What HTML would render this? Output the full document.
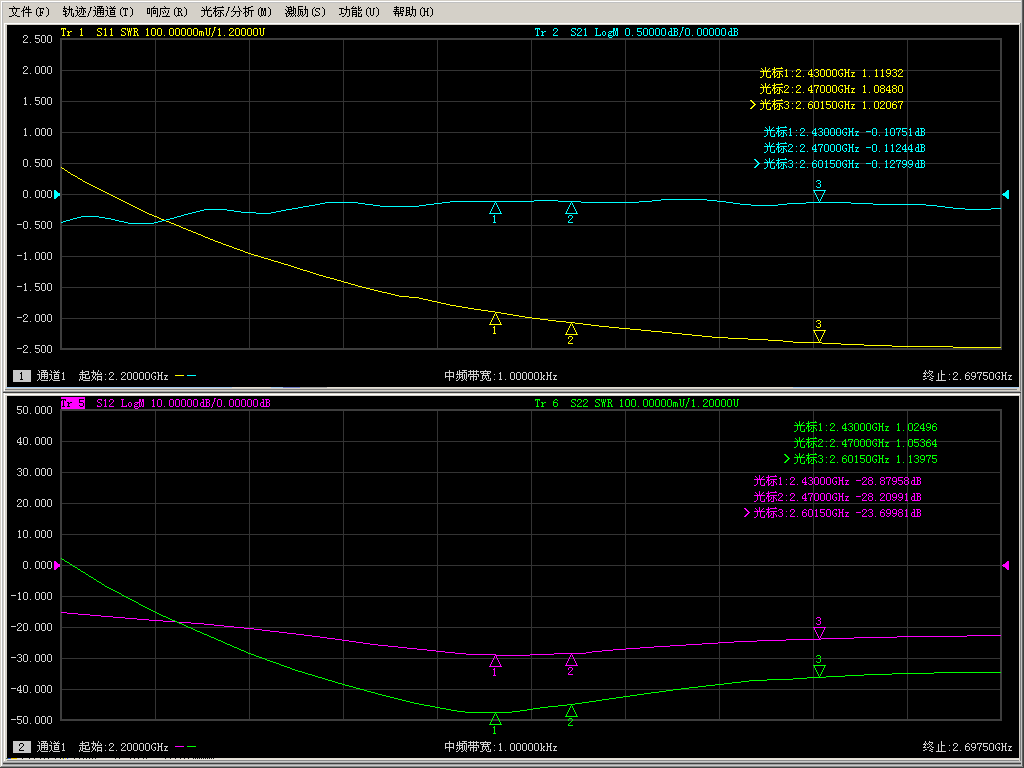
<!DOCTYPE html>
<html><head><meta charset="utf-8"><style>
html,body{margin:0;padding:0;background:#d4d0c8;overflow:hidden;font-family:"Liberation Sans",sans-serif;}
svg{position:absolute;left:0;top:0;display:block;}
</style></head><body>
<svg width="1024" height="768" viewBox="0 0 1024 768" shape-rendering="crispEdges">
<defs><path id="g6587" d="M4 0h1v1h-1zM5 1h1v1h-1zM0 2h11v1h-11zM3 3h1v1h-1zM7 3h1v1h-1zM3 4h1v1h-1zM7 4h1v1h-1zM3 5h1v1h-1zM7 5h1v1h-1zM4 6h1v1h-1zM6 6h1v1h-1zM4 7h1v1h-1zM6 7h1v1h-1zM5 8h1v1h-1zM3 9h2v1h-2zM6 9h2v1h-2zM0 10h3v1h-3zM8 10h3v1h-3z"/><path id="g4ef6" d="M3 0h1v1h-1zM7 0h1v1h-1zM3 1h1v1h-1zM5 1h1v1h-1zM7 1h1v1h-1zM2 2h1v1h-1zM5 2h1v1h-1zM7 2h1v1h-1zM2 3h1v1h-1zM4 3h6v1h-6zM1 4h3v1h-3zM7 4h1v1h-1zM0 5h1v1h-1zM2 5h1v1h-1zM7 5h1v1h-1zM2 6h1v1h-1zM4 6h7v1h-7zM2 7h1v1h-1zM7 7h1v1h-1zM2 8h1v1h-1zM7 8h1v1h-1zM2 9h1v1h-1zM7 9h1v1h-1zM2 10h1v1h-1zM7 10h1v1h-1z"/><path id="g28" d="M5 1h1v1h-1zM4 2h1v1h-1zM3 3h1v1h-1zM3 4h1v1h-1zM3 5h1v1h-1zM3 6h1v1h-1zM3 7h1v1h-1zM3 8h1v1h-1zM4 9h1v1h-1zM5 10h1v1h-1z"/><path id="g46" d="M0 2h5v1h-5zM1 3h1v1h-1zM4 3h1v1h-1zM1 4h1v1h-1zM1 5h1v1h-1zM3 5h1v1h-1zM1 6h3v1h-3zM1 7h1v1h-1zM3 7h1v1h-1zM1 8h1v1h-1zM0 9h3v1h-3z"/><path id="g29" d="M1 1h1v1h-1zM2 2h1v1h-1zM3 3h1v1h-1zM3 4h1v1h-1zM3 5h1v1h-1zM3 6h1v1h-1zM3 7h1v1h-1zM3 8h1v1h-1zM2 9h1v1h-1zM1 10h1v1h-1z"/><path id="g8f68" d="M1 0h1v1h-1zM6 0h1v1h-1zM1 1h1v1h-1zM6 1h1v1h-1zM0 2h4v1h-4zM6 2h1v1h-1zM8 2h1v1h-1zM1 3h1v1h-1zM4 3h6v1h-6zM0 4h1v1h-1zM2 4h1v1h-1zM6 4h1v1h-1zM8 4h1v1h-1zM0 5h4v1h-4zM6 5h1v1h-1zM8 5h1v1h-1zM2 6h1v1h-1zM6 6h1v1h-1zM8 6h1v1h-1zM2 7h2v1h-2zM5 7h1v1h-1zM8 7h1v1h-1zM10 7h1v1h-1zM0 8h3v1h-3zM5 8h1v1h-1zM8 8h1v1h-1zM10 8h1v1h-1zM2 9h1v1h-1zM4 9h1v1h-1zM8 9h1v1h-1zM10 9h1v1h-1zM2 10h2v1h-2zM9 10h2v1h-2z"/><path id="g8ff9" d="M1 0h1v1h-1zM6 0h1v1h-1zM2 1h1v1h-1zM7 1h1v1h-1zM2 2h1v1h-1zM4 2h7v1h-7zM6 3h1v1h-1zM8 3h1v1h-1zM0 4h3v1h-3zM4 4h1v1h-1zM6 4h1v1h-1zM8 4h2v1h-2zM2 5h1v1h-1zM4 5h1v1h-1zM6 5h1v1h-1zM8 5h1v1h-1zM10 5h1v1h-1zM2 6h2v1h-2zM6 6h1v1h-1zM8 6h1v1h-1zM10 6h1v1h-1zM2 7h1v1h-1zM5 7h1v1h-1zM8 7h1v1h-1zM2 8h1v1h-1zM4 8h1v1h-1zM7 8h2v1h-2zM1 9h1v1h-1zM3 9h1v1h-1zM0 10h1v1h-1zM4 10h7v1h-7z"/><path id="g2f" d="M3 1h2v1h-2zM3 2h1v1h-1zM3 3h1v1h-1zM3 4h1v1h-1zM2 5h1v1h-1zM2 6h1v1h-1zM1 7h1v1h-1zM1 8h1v1h-1zM1 9h1v1h-1zM0 10h1v1h-1z"/><path id="g901a" d="M1 0h1v1h-1zM4 0h6v1h-6zM2 1h1v1h-1zM6 1h1v1h-1zM8 1h1v1h-1zM2 2h1v1h-1zM4 2h7v1h-7zM4 3h1v1h-1zM7 3h1v1h-1zM10 3h1v1h-1zM0 4h3v1h-3zM4 4h7v1h-7zM2 5h1v1h-1zM4 5h1v1h-1zM7 5h1v1h-1zM10 5h1v1h-1zM2 6h1v1h-1zM4 6h7v1h-7zM2 7h1v1h-1zM4 7h1v1h-1zM7 7h1v1h-1zM10 7h1v1h-1zM2 8h1v1h-1zM4 8h1v1h-1zM7 8h1v1h-1zM9 8h2v1h-2zM1 9h1v1h-1zM3 9h1v1h-1zM0 10h1v1h-1zM4 10h7v1h-7z"/><path id="g9053" d="M1 0h1v1h-1zM5 0h1v1h-1zM9 0h1v1h-1zM2 1h1v1h-1zM6 1h1v1h-1zM8 1h1v1h-1zM2 2h1v1h-1zM4 2h7v1h-7zM7 3h1v1h-1zM0 4h3v1h-3zM5 4h5v1h-5zM2 5h1v1h-1zM5 5h1v1h-1zM9 5h1v1h-1zM2 6h1v1h-1zM5 6h5v1h-5zM2 7h1v1h-1zM5 7h1v1h-1zM9 7h1v1h-1zM2 8h1v1h-1zM5 8h5v1h-5zM1 9h1v1h-1zM3 9h1v1h-1zM0 10h1v1h-1zM4 10h7v1h-7z"/><path id="g54" d="M0 2h5v1h-5zM0 3h1v1h-1zM2 3h1v1h-1zM4 3h1v1h-1zM2 4h1v1h-1zM2 5h1v1h-1zM2 6h1v1h-1zM2 7h1v1h-1zM2 8h1v1h-1zM1 9h3v1h-3z"/><path id="g54cd" d="M7 0h1v1h-1zM6 1h1v1h-1zM0 2h3v1h-3zM4 2h7v1h-7zM0 3h1v1h-1zM2 3h1v1h-1zM4 3h1v1h-1zM10 3h1v1h-1zM0 4h1v1h-1zM2 4h1v1h-1zM4 4h1v1h-1zM6 4h3v1h-3zM10 4h1v1h-1zM0 5h1v1h-1zM2 5h1v1h-1zM4 5h1v1h-1zM6 5h1v1h-1zM8 5h1v1h-1zM10 5h1v1h-1zM0 6h1v1h-1zM2 6h1v1h-1zM4 6h1v1h-1zM6 6h1v1h-1zM8 6h1v1h-1zM10 6h1v1h-1zM0 7h3v1h-3zM4 7h1v1h-1zM6 7h3v1h-3zM10 7h1v1h-1zM4 8h1v1h-1zM10 8h1v1h-1zM4 9h1v1h-1zM10 9h1v1h-1zM4 10h1v1h-1zM9 10h2v1h-2z"/><path id="g5e94" d="M5 0h1v1h-1zM6 1h1v1h-1zM1 2h10v1h-10zM1 3h1v1h-1zM1 4h1v1h-1zM5 4h1v1h-1zM9 4h1v1h-1zM1 5h1v1h-1zM3 5h1v1h-1zM6 5h1v1h-1zM9 5h1v1h-1zM1 6h1v1h-1zM4 6h1v1h-1zM6 6h1v1h-1zM9 6h1v1h-1zM1 7h1v1h-1zM4 7h1v1h-1zM8 7h1v1h-1zM1 8h1v1h-1zM8 8h1v1h-1zM0 9h1v1h-1zM7 9h1v1h-1zM0 10h1v1h-1zM3 10h8v1h-8z"/><path id="g52" d="M0 2h4v1h-4zM1 3h1v1h-1zM4 3h1v1h-1zM1 4h1v1h-1zM4 4h1v1h-1zM1 5h3v1h-3zM1 6h1v1h-1zM3 6h1v1h-1zM1 7h1v1h-1zM4 7h1v1h-1zM1 8h1v1h-1zM4 8h1v1h-1zM0 9h3v1h-3zM4 9h2v1h-2z"/><path id="g5149" d="M5 0h1v1h-1zM1 1h1v1h-1zM5 1h1v1h-1zM9 1h1v1h-1zM2 2h1v1h-1zM5 2h1v1h-1zM8 2h1v1h-1zM3 3h1v1h-1zM5 3h1v1h-1zM7 3h1v1h-1zM0 4h11v1h-11zM3 5h1v1h-1zM6 5h1v1h-1zM3 6h1v1h-1zM6 6h1v1h-1zM3 7h1v1h-1zM6 7h1v1h-1zM3 8h1v1h-1zM6 8h1v1h-1zM10 8h1v1h-1zM2 9h1v1h-1zM6 9h1v1h-1zM10 9h1v1h-1zM0 10h2v1h-2zM7 10h4v1h-4z"/><path id="g6807" d="M2 0h1v1h-1zM9 0h1v1h-1zM2 1h1v1h-1zM4 1h7v1h-7zM0 2h4v1h-4zM2 3h1v1h-1zM1 4h2v1h-2zM4 4h7v1h-7zM1 5h3v1h-3zM7 5h1v1h-1zM0 6h1v1h-1zM2 6h1v1h-1zM5 6h1v1h-1zM7 6h2v1h-2zM0 7h1v1h-1zM2 7h1v1h-1zM5 7h1v1h-1zM7 7h1v1h-1zM9 7h1v1h-1zM2 8h1v1h-1zM4 8h1v1h-1zM7 8h1v1h-1zM10 8h1v1h-1zM2 9h2v1h-2zM7 9h1v1h-1zM10 9h1v1h-1zM2 10h1v1h-1zM5 10h3v1h-3z"/><path id="g5206" d="M3 0h1v1h-1zM7 0h1v1h-1zM3 1h1v1h-1zM7 1h1v1h-1zM2 2h1v1h-1zM8 2h1v1h-1zM2 3h1v1h-1zM8 3h1v1h-1zM1 4h1v1h-1zM9 4h1v1h-1zM0 5h1v1h-1zM2 5h7v1h-7zM10 5h1v1h-1zM4 6h1v1h-1zM8 6h1v1h-1zM4 7h1v1h-1zM8 7h1v1h-1zM3 8h1v1h-1zM8 8h1v1h-1zM2 9h1v1h-1zM8 9h1v1h-1zM0 10h2v1h-2zM6 10h2v1h-2z"/><path id="g6790" d="M2 0h1v1h-1zM8 0h2v1h-2zM2 1h1v1h-1zM5 1h3v1h-3zM0 2h6v1h-6zM2 3h1v1h-1zM5 3h1v1h-1zM2 4h1v1h-1zM5 4h6v1h-6zM2 5h2v1h-2zM5 5h1v1h-1zM8 5h1v1h-1zM1 6h2v1h-2zM4 6h2v1h-2zM8 6h1v1h-1zM0 7h1v1h-1zM2 7h1v1h-1zM5 7h1v1h-1zM8 7h1v1h-1zM2 8h1v1h-1zM5 8h1v1h-1zM8 8h1v1h-1zM2 9h1v1h-1zM4 9h1v1h-1zM8 9h1v1h-1zM2 10h2v1h-2zM8 10h1v1h-1z"/><path id="g4d" d="M0 2h2v1h-2zM3 2h2v1h-2zM0 3h2v1h-2zM3 3h2v1h-2zM0 4h2v1h-2zM3 4h2v1h-2zM0 5h1v1h-1zM2 5h1v1h-1zM4 5h1v1h-1zM0 6h1v1h-1zM2 6h1v1h-1zM4 6h1v1h-1zM0 7h1v1h-1zM2 7h1v1h-1zM4 7h1v1h-1zM0 8h1v1h-1zM2 8h1v1h-1zM4 8h1v1h-1zM0 9h2v1h-2zM3 9h2v1h-2z"/><path id="g6fc0" d="M1 0h1v1h-1zM5 0h1v1h-1zM8 0h1v1h-1zM2 1h5v1h-5zM8 1h1v1h-1zM3 2h1v1h-1zM6 2h1v1h-1zM8 2h3v1h-3zM0 3h1v1h-1zM3 3h4v1h-4zM8 3h1v1h-1zM10 3h1v1h-1zM1 4h1v1h-1zM3 4h1v1h-1zM6 4h3v1h-3zM10 4h1v1h-1zM2 5h5v1h-5zM8 5h1v1h-1zM10 5h1v1h-1zM2 6h1v1h-1zM4 6h1v1h-1zM8 6h1v1h-1zM10 6h1v1h-1zM0 7h2v1h-2zM3 7h6v1h-6zM10 7h1v1h-1zM1 8h1v1h-1zM4 8h1v1h-1zM6 8h1v1h-1zM9 8h1v1h-1zM1 9h1v1h-1zM3 9h1v1h-1zM6 9h1v1h-1zM8 9h1v1h-1zM10 9h1v1h-1zM1 10h2v1h-2zM5 10h1v1h-1zM7 10h1v1h-1zM10 10h1v1h-1z"/><path id="g52b1" d="M1 0h5v1h-5zM8 0h1v1h-1zM1 1h1v1h-1zM8 1h1v1h-1zM1 2h1v1h-1zM8 2h1v1h-1zM1 3h5v1h-5zM7 3h4v1h-4zM1 4h1v1h-1zM3 4h1v1h-1zM8 4h1v1h-1zM10 4h1v1h-1zM1 5h1v1h-1zM3 5h3v1h-3zM8 5h1v1h-1zM10 5h1v1h-1zM1 6h1v1h-1zM3 6h1v1h-1zM5 6h1v1h-1zM8 6h1v1h-1zM10 6h1v1h-1zM1 7h1v1h-1zM3 7h1v1h-1zM5 7h1v1h-1zM8 7h1v1h-1zM10 7h1v1h-1zM1 8h1v1h-1zM3 8h1v1h-1zM5 8h1v1h-1zM7 8h1v1h-1zM10 8h1v1h-1zM0 9h1v1h-1zM2 9h1v1h-1zM4 9h1v1h-1zM6 9h1v1h-1zM10 9h1v1h-1zM1 10h1v1h-1zM5 10h1v1h-1zM9 10h2v1h-2z"/><path id="g53" d="M1 2h4v1h-4zM0 3h1v1h-1zM4 3h1v1h-1zM0 4h1v1h-1zM1 5h2v1h-2zM3 6h1v1h-1zM4 7h1v1h-1zM0 8h1v1h-1zM4 8h1v1h-1zM0 9h4v1h-4z"/><path id="g529f" d="M7 0h1v1h-1zM7 1h1v1h-1zM0 2h5v1h-5zM7 2h1v1h-1zM2 3h1v1h-1zM5 3h6v1h-6zM2 4h1v1h-1zM7 4h1v1h-1zM10 4h1v1h-1zM2 5h1v1h-1zM7 5h1v1h-1zM10 5h1v1h-1zM2 6h1v1h-1zM7 6h1v1h-1zM10 6h1v1h-1zM2 7h3v1h-3zM6 7h1v1h-1zM10 7h1v1h-1zM0 8h2v1h-2zM6 8h1v1h-1zM10 8h1v1h-1zM5 9h1v1h-1zM10 9h1v1h-1zM3 10h2v1h-2zM8 10h2v1h-2z"/><path id="g80fd" d="M2 0h1v1h-1zM7 0h1v1h-1zM1 1h1v1h-1zM4 1h1v1h-1zM7 1h1v1h-1zM9 1h1v1h-1zM0 2h6v1h-6zM7 2h2v1h-2zM7 3h1v1h-1zM10 3h1v1h-1zM1 4h5v1h-5zM7 4h4v1h-4zM1 5h1v1h-1zM5 5h1v1h-1zM1 6h5v1h-5zM7 6h1v1h-1zM9 6h1v1h-1zM1 7h1v1h-1zM5 7h1v1h-1zM7 7h2v1h-2zM1 8h5v1h-5zM7 8h1v1h-1zM10 8h1v1h-1zM1 9h1v1h-1zM5 9h1v1h-1zM7 9h1v1h-1zM10 9h1v1h-1zM1 10h1v1h-1zM4 10h2v1h-2zM7 10h4v1h-4z"/><path id="g55" d="M0 2h2v1h-2zM4 2h2v1h-2zM1 3h1v1h-1zM4 3h1v1h-1zM1 4h1v1h-1zM4 4h1v1h-1zM1 5h1v1h-1zM4 5h1v1h-1zM1 6h1v1h-1zM4 6h1v1h-1zM1 7h1v1h-1zM4 7h1v1h-1zM1 8h1v1h-1zM4 8h1v1h-1zM2 9h2v1h-2z"/><path id="g5e2e" d="M3 0h1v1h-1zM1 1h5v1h-5zM7 1h4v1h-4zM3 2h1v1h-1zM7 2h1v1h-1zM10 2h1v1h-1zM1 3h5v1h-5zM7 3h1v1h-1zM9 3h1v1h-1zM3 4h1v1h-1zM7 4h1v1h-1zM10 4h1v1h-1zM0 5h6v1h-6zM7 5h4v1h-4zM2 6h1v1h-1zM5 6h1v1h-1zM7 6h1v1h-1zM1 7h9v1h-9zM2 8h1v1h-1zM5 8h1v1h-1zM9 8h1v1h-1zM2 9h1v1h-1zM5 9h1v1h-1zM8 9h2v1h-2zM5 10h1v1h-1z"/><path id="g52a9" d="M7 0h1v1h-1zM1 1h4v1h-4zM7 1h1v1h-1zM1 2h1v1h-1zM4 2h1v1h-1zM7 2h1v1h-1zM1 3h1v1h-1zM4 3h1v1h-1zM6 3h5v1h-5zM1 4h4v1h-4zM7 4h1v1h-1zM10 4h1v1h-1zM1 5h1v1h-1zM4 5h1v1h-1zM7 5h1v1h-1zM10 5h1v1h-1zM1 6h4v1h-4zM7 6h1v1h-1zM10 6h1v1h-1zM1 7h1v1h-1zM4 7h1v1h-1zM7 7h1v1h-1zM10 7h1v1h-1zM1 8h1v1h-1zM3 8h4v1h-4zM10 8h1v1h-1zM0 9h3v1h-3zM6 9h1v1h-1zM8 9h1v1h-1zM10 9h1v1h-1zM5 10h1v1h-1zM9 10h1v1h-1z"/><path id="g48" d="M0 2h2v1h-2zM4 2h2v1h-2zM1 3h1v1h-1zM4 3h1v1h-1zM1 4h1v1h-1zM4 4h1v1h-1zM1 5h4v1h-4zM1 6h1v1h-1zM4 6h1v1h-1zM1 7h1v1h-1zM4 7h1v1h-1zM1 8h1v1h-1zM4 8h1v1h-1zM0 9h2v1h-2zM4 9h2v1h-2z"/><path id="g32" d="M1 2h3v1h-3zM0 3h1v1h-1zM4 3h1v1h-1zM0 4h1v1h-1zM4 4h1v1h-1zM3 5h1v1h-1zM2 6h1v1h-1zM1 7h1v1h-1zM0 8h1v1h-1zM0 9h5v1h-5z"/><path id="g2e" d="M1 9h1v1h-1z"/><path id="g35" d="M0 2h5v1h-5zM0 3h1v1h-1zM0 4h1v1h-1zM0 5h4v1h-4zM4 6h1v1h-1zM4 7h1v1h-1zM0 8h1v1h-1zM4 8h1v1h-1zM1 9h3v1h-3z"/><path id="g30" d="M1 2h3v1h-3zM0 3h1v1h-1zM4 3h1v1h-1zM0 4h1v1h-1zM4 4h1v1h-1zM0 5h1v1h-1zM4 5h1v1h-1zM0 6h1v1h-1zM4 6h1v1h-1zM0 7h1v1h-1zM4 7h1v1h-1zM0 8h1v1h-1zM4 8h1v1h-1zM1 9h3v1h-3z"/><path id="g31" d="M2 2h1v1h-1zM1 3h2v1h-2zM2 4h1v1h-1zM2 5h1v1h-1zM2 6h1v1h-1zM2 7h1v1h-1zM2 8h1v1h-1zM1 9h3v1h-3z"/><path id="g2d" d="M0 5h5v1h-5z"/><path id="g33" d="M1 2h3v1h-3zM0 3h1v1h-1zM4 3h1v1h-1zM4 4h1v1h-1zM2 5h2v1h-2zM4 6h1v1h-1zM4 7h1v1h-1zM0 8h1v1h-1zM4 8h1v1h-1zM1 9h3v1h-3z"/><path id="g72" d="M0 5h2v1h-2zM3 5h2v1h-2zM1 6h2v1h-2zM1 7h1v1h-1zM1 8h1v1h-1zM0 9h3v1h-3z"/><path id="g57" d="M0 2h1v1h-1zM2 2h1v1h-1zM4 2h1v1h-1zM0 3h1v1h-1zM2 3h1v1h-1zM4 3h1v1h-1zM0 4h1v1h-1zM2 4h1v1h-1zM4 4h1v1h-1zM1 5h3v1h-3zM1 6h1v1h-1zM3 6h1v1h-1zM1 7h1v1h-1zM3 7h1v1h-1zM1 8h1v1h-1zM3 8h1v1h-1zM1 9h1v1h-1zM3 9h1v1h-1z"/><path id="g6d" d="M0 5h4v1h-4zM0 6h1v1h-1zM2 6h1v1h-1zM4 6h1v1h-1zM0 7h1v1h-1zM2 7h1v1h-1zM4 7h1v1h-1zM0 8h1v1h-1zM2 8h1v1h-1zM4 8h1v1h-1zM0 9h1v1h-1zM2 9h1v1h-1zM4 9h1v1h-1z"/><path id="g4c" d="M0 2h3v1h-3zM1 3h1v1h-1zM1 4h1v1h-1zM1 5h1v1h-1zM1 6h1v1h-1zM1 7h1v1h-1zM1 8h1v1h-1zM5 8h1v1h-1zM0 9h6v1h-6z"/><path id="g6f" d="M2 5h2v1h-2zM1 6h1v1h-1zM4 6h1v1h-1zM1 7h1v1h-1zM4 7h1v1h-1zM1 8h1v1h-1zM4 8h1v1h-1zM2 9h2v1h-2z"/><path id="g67" d="M2 5h4v1h-4zM1 6h1v1h-1zM4 6h1v1h-1zM2 7h2v1h-2zM1 8h1v1h-1zM1 9h4v1h-4zM1 10h1v1h-1zM5 10h1v1h-1zM2 11h3v1h-3z"/><path id="g64" d="M3 2h2v1h-2zM4 3h1v1h-1zM4 4h1v1h-1zM2 5h3v1h-3zM1 6h1v1h-1zM4 6h1v1h-1zM1 7h1v1h-1zM4 7h1v1h-1zM1 8h1v1h-1zM4 8h1v1h-1zM2 9h4v1h-4z"/><path id="g42" d="M0 2h4v1h-4zM1 3h1v1h-1zM4 3h1v1h-1zM1 4h1v1h-1zM4 4h1v1h-1zM1 5h3v1h-3zM1 6h1v1h-1zM4 6h1v1h-1zM1 7h1v1h-1zM4 7h1v1h-1zM1 8h1v1h-1zM4 8h1v1h-1zM0 9h4v1h-4z"/><path id="g3a" d="M2 4h1v1h-1zM2 9h1v1h-1z"/><path id="g34" d="M3 2h1v1h-1zM2 3h2v1h-2zM1 4h1v1h-1zM3 4h1v1h-1zM0 5h1v1h-1zM3 5h1v1h-1zM0 6h1v1h-1zM3 6h1v1h-1zM0 7h5v1h-5zM3 8h1v1h-1zM2 9h3v1h-3z"/><path id="g47" d="M2 2h3v1h-3zM1 3h1v1h-1zM4 3h1v1h-1zM0 4h1v1h-1zM0 5h1v1h-1zM0 6h1v1h-1zM3 6h2v1h-2zM0 7h1v1h-1zM4 7h1v1h-1zM1 8h1v1h-1zM4 8h1v1h-1zM2 9h2v1h-2z"/><path id="g7a" d="M1 5h4v1h-4zM3 6h1v1h-1zM2 7h1v1h-1zM2 8h1v1h-1zM1 9h4v1h-4z"/><path id="g39" d="M1 2h3v1h-3zM0 3h1v1h-1zM4 3h1v1h-1zM0 4h1v1h-1zM4 4h1v1h-1zM0 5h1v1h-1zM4 5h1v1h-1zM1 6h4v1h-4zM4 7h1v1h-1zM0 8h1v1h-1zM3 8h1v1h-1zM1 9h2v1h-2z"/><path id="g37" d="M0 2h5v1h-5zM0 3h1v1h-1zM4 3h1v1h-1zM3 4h1v1h-1zM3 5h1v1h-1zM2 6h1v1h-1zM2 7h1v1h-1zM2 8h1v1h-1zM2 9h1v1h-1z"/><path id="g38" d="M1 2h3v1h-3zM0 3h1v1h-1zM4 3h1v1h-1zM0 4h1v1h-1zM4 4h1v1h-1zM1 5h3v1h-3zM0 6h1v1h-1zM4 6h1v1h-1zM0 7h1v1h-1zM4 7h1v1h-1zM0 8h1v1h-1zM4 8h1v1h-1zM1 9h3v1h-3z"/><path id="g36" d="M2 2h2v1h-2zM1 3h1v1h-1zM4 3h1v1h-1zM0 4h1v1h-1zM0 5h4v1h-4zM0 6h1v1h-1zM4 6h1v1h-1zM0 7h1v1h-1zM4 7h1v1h-1zM0 8h1v1h-1zM4 8h1v1h-1zM1 9h3v1h-3z"/><path id="g3e" d="M0 1h2v1h-2zM1 2h2v1h-2zM2 3h2v1h-2zM3 4h2v1h-2zM4 5h2v1h-2zM3 6h2v1h-2zM2 7h2v1h-2zM1 8h2v1h-2zM0 9h2v1h-2z"/><path id="g8d77" d="M3 0h1v1h-1zM3 1h1v1h-1zM6 1h4v1h-4zM1 2h5v1h-5zM9 2h1v1h-1zM3 3h1v1h-1zM9 3h1v1h-1zM0 4h10v1h-10zM3 5h1v1h-1zM6 5h1v1h-1zM1 6h1v1h-1zM3 6h1v1h-1zM6 6h1v1h-1zM10 6h1v1h-1zM1 7h1v1h-1zM3 7h4v1h-4zM10 7h1v1h-1zM1 8h1v1h-1zM3 8h1v1h-1zM6 8h5v1h-5zM0 9h1v1h-1zM2 9h2v1h-2zM0 10h1v1h-1zM4 10h7v1h-7z"/><path id="g59cb" d="M2 0h1v1h-1zM7 0h1v1h-1zM2 1h1v1h-1zM7 1h1v1h-1zM0 2h5v1h-5zM6 2h1v1h-1zM9 2h1v1h-1zM2 3h1v1h-1zM4 3h1v1h-1zM6 3h1v1h-1zM10 3h1v1h-1zM2 4h1v1h-1zM4 4h7v1h-7zM1 5h1v1h-1zM4 5h1v1h-1zM1 6h1v1h-1zM3 6h1v1h-1zM6 6h5v1h-5zM2 7h2v1h-2zM6 7h1v1h-1zM10 7h1v1h-1zM2 8h1v1h-1zM4 8h1v1h-1zM6 8h1v1h-1zM10 8h1v1h-1zM1 9h1v1h-1zM4 9h1v1h-1zM6 9h5v1h-5zM0 10h1v1h-1zM6 10h1v1h-1zM10 10h1v1h-1z"/><path id="g4e2d" d="M5 0h1v1h-1zM5 1h1v1h-1zM1 2h9v1h-9zM1 3h1v1h-1zM5 3h1v1h-1zM9 3h1v1h-1zM1 4h1v1h-1zM5 4h1v1h-1zM9 4h1v1h-1zM1 5h1v1h-1zM5 5h1v1h-1zM9 5h1v1h-1zM1 6h9v1h-9zM1 7h1v1h-1zM5 7h1v1h-1zM9 7h1v1h-1zM5 8h1v1h-1zM5 9h1v1h-1zM5 10h1v1h-1z"/><path id="g9891" d="M3 0h1v1h-1zM6 0h5v1h-5zM1 1h1v1h-1zM3 1h1v1h-1zM8 1h1v1h-1zM1 2h1v1h-1zM3 2h8v1h-8zM1 3h1v1h-1zM3 3h1v1h-1zM6 3h1v1h-1zM10 3h1v1h-1zM0 4h7v1h-7zM8 4h1v1h-1zM10 4h1v1h-1zM3 5h1v1h-1zM6 5h1v1h-1zM8 5h1v1h-1zM10 5h1v1h-1zM1 6h1v1h-1zM3 6h1v1h-1zM5 6h2v1h-2zM8 6h1v1h-1zM10 6h1v1h-1zM1 7h1v1h-1zM3 7h2v1h-2zM6 7h1v1h-1zM8 7h1v1h-1zM10 7h1v1h-1zM0 8h1v1h-1zM3 8h1v1h-1zM6 8h1v1h-1zM8 8h1v1h-1zM10 8h1v1h-1zM2 9h1v1h-1zM7 9h1v1h-1zM9 9h1v1h-1zM0 10h2v1h-2zM5 10h2v1h-2zM10 10h1v1h-1z"/><path id="g5e26" d="M2 0h1v1h-1zM5 0h1v1h-1zM8 0h1v1h-1zM0 1h11v1h-11zM2 2h1v1h-1zM5 2h1v1h-1zM8 2h1v1h-1zM2 3h1v1h-1zM5 3h1v1h-1zM8 3h1v1h-1zM0 4h11v1h-11zM0 5h1v1h-1zM5 5h1v1h-1zM10 5h1v1h-1zM0 6h1v1h-1zM2 6h7v1h-7zM10 6h1v1h-1zM2 7h1v1h-1zM5 7h1v1h-1zM8 7h1v1h-1zM2 8h1v1h-1zM5 8h1v1h-1zM8 8h1v1h-1zM2 9h1v1h-1zM5 9h1v1h-1zM7 9h2v1h-2zM5 10h1v1h-1z"/><path id="g5bbd" d="M5 0h1v1h-1zM0 1h11v1h-11zM0 2h1v1h-1zM3 2h1v1h-1zM7 2h1v1h-1zM10 2h1v1h-1zM1 3h9v1h-9zM3 4h1v1h-1zM7 4h1v1h-1zM2 5h7v1h-7zM2 6h1v1h-1zM5 6h1v1h-1zM8 6h1v1h-1zM2 7h1v1h-1zM5 7h1v1h-1zM8 7h1v1h-1zM2 8h1v1h-1zM4 8h1v1h-1zM6 8h1v1h-1zM8 8h1v1h-1zM10 8h1v1h-1zM3 9h1v1h-1zM6 9h1v1h-1zM10 9h1v1h-1zM0 10h3v1h-3zM7 10h4v1h-4z"/><path id="g6b" d="M0 2h2v1h-2zM1 3h1v1h-1zM1 4h1v1h-1zM1 5h1v1h-1zM3 5h2v1h-2zM1 6h1v1h-1zM3 6h1v1h-1zM1 7h2v1h-2zM1 8h1v1h-1zM3 8h1v1h-1zM0 9h2v1h-2zM3 9h2v1h-2z"/><path id="g7ec8" d="M2 0h1v1h-1zM6 0h1v1h-1zM2 1h1v1h-1zM6 1h4v1h-4zM1 2h1v1h-1zM3 2h1v1h-1zM5 2h1v1h-1zM9 2h1v1h-1zM0 3h3v1h-3zM4 3h1v1h-1zM6 3h1v1h-1zM8 3h1v1h-1zM2 4h1v1h-1zM7 4h1v1h-1zM1 5h1v1h-1zM6 5h1v1h-1zM8 5h1v1h-1zM0 6h3v1h-3zM4 6h2v1h-2zM9 6h2v1h-2zM7 7h1v1h-1zM2 8h2v1h-2zM8 8h2v1h-2zM0 9h2v1h-2zM6 9h2v1h-2zM8 10h2v1h-2z"/><path id="g6b62" d="M6 0h1v1h-1zM6 1h1v1h-1zM6 2h1v1h-1zM3 3h1v1h-1zM6 3h1v1h-1zM3 4h1v1h-1zM6 4h4v1h-4zM3 5h1v1h-1zM6 5h1v1h-1zM3 6h1v1h-1zM6 6h1v1h-1zM3 7h1v1h-1zM6 7h1v1h-1zM3 8h1v1h-1zM6 8h1v1h-1zM3 9h1v1h-1zM6 9h1v1h-1zM1 10h10v1h-10z"/></defs>
<rect x="0" y="0" width="1024" height="768" fill="#d4d0c8"/>
<rect x="1" y="1" width="1021" height="1" fill="#ffffff"/>
<rect x="1" y="1" width="1" height="766" fill="#ffffff"/>
<rect x="2" y="2" width="1019" height="1" fill="#c0c0c0"/>
<rect x="2" y="2" width="1" height="764" fill="#b8b8b8"/>
<rect x="1020" y="23" width="1" height="744" fill="#808080"/>
<rect x="1021" y="0" width="1" height="768" fill="#c4c4c4"/>
<rect x="1022" y="0" width="1" height="768" fill="#606060"/>
<rect x="1023" y="0" width="1" height="768" fill="#404040"/>
<rect x="4" y="23" width="1016" height="1" fill="#ffffff"/>
<rect x="4" y="23" width="1" height="739" fill="#ffffff"/>
<rect x="7" y="25" width="1012" height="362" fill="#000000"/>
<rect x="6" y="387" width="1013" height="1" fill="#e0dcd4"/>
<rect x="6" y="387" width="226" height="1" fill="#a6caf0"/>
<rect x="271" y="387" width="12" height="1" fill="#a6caf0"/>
<rect x="283" y="387" width="17" height="1" fill="#7080c8"/>
<rect x="300" y="387" width="27" height="1" fill="#a8a8a8"/>
<rect x="793" y="387" width="226" height="1" fill="#a6caf0"/>
<rect x="5" y="389" width="1012" height="1" fill="#808080"/>
<rect x="3" y="391" width="1018" height="1" fill="#a0a0a0"/>
<rect x="3" y="392" width="1018" height="1" fill="#404040"/>
<rect x="4" y="394" width="1016" height="1" fill="#ffffff"/>
<rect x="7" y="396" width="1012" height="362" fill="#000000"/>
<rect x="6" y="758" width="1013" height="1" fill="#e0dcd4"/>
<rect x="6" y="759" width="1013" height="1" fill="#e8e4dc"/>
<rect x="7" y="760" width="1012" height="1" fill="#888888"/>
<rect x="6" y="758" width="2" height="1" fill="#507040"/>
<rect x="8" y="758" width="3" height="1" fill="#3050d0"/>
<rect x="11" y="758" width="6" height="1" fill="#f0c800"/>
<rect x="62" y="758" width="1" height="1" fill="#f0e000"/>
<rect x="63" y="758" width="1" height="1" fill="#2040e0"/>
<rect x="65" y="758" width="1" height="1" fill="#f0e000"/>
<rect x="67" y="758" width="1" height="1" fill="#3050e0"/>
<rect x="22" y="758" width="1" height="1" fill="#202020"/>
<rect x="29" y="758" width="1" height="1" fill="#202020"/>
<rect x="34" y="758" width="1" height="1" fill="#202020"/>
<rect x="40" y="758" width="1" height="1" fill="#202020"/>
<rect x="44" y="758" width="1" height="1" fill="#202020"/>
<rect x="48" y="758" width="1" height="1" fill="#202020"/>
<rect x="55" y="758" width="1" height="1" fill="#202020"/>
<rect x="60" y="758" width="1" height="1" fill="#202020"/>
<rect x="74" y="758" width="1" height="1" fill="#202020"/>
<rect x="79" y="758" width="1" height="1" fill="#202020"/>
<rect x="83" y="758" width="1" height="1" fill="#202020"/>
<rect x="86" y="758" width="1" height="1" fill="#202020"/>
<rect x="89" y="758" width="1" height="1" fill="#202020"/>
<rect x="92" y="758" width="1" height="1" fill="#202020"/>
<rect x="95" y="758" width="1" height="1" fill="#202020"/>
<rect x="115" y="758" width="1" height="1" fill="#202020"/>
<rect x="119" y="758" width="1" height="1" fill="#202020"/>
<rect x="130" y="758" width="1" height="1" fill="#202020"/>
<rect x="134" y="758" width="1" height="1" fill="#202020"/>
<rect x="138" y="758" width="1" height="1" fill="#202020"/>
<rect x="143" y="758" width="1" height="1" fill="#202020"/>
<rect x="146" y="758" width="1" height="1" fill="#202020"/>
<rect x="165" y="758" width="1" height="1" fill="#202020"/>
<rect x="170" y="758" width="1" height="1" fill="#202020"/>
<rect x="175" y="758" width="1" height="1" fill="#202020"/>
<rect x="180" y="758" width="1" height="1" fill="#202020"/>
<rect x="184" y="758" width="1" height="1" fill="#202020"/>
<rect x="188" y="758" width="1" height="1" fill="#202020"/>
<rect x="193" y="758" width="1" height="1" fill="#202020"/>
<rect x="195" y="758" width="1" height="1" fill="#202020"/>
<rect x="197" y="758" width="1" height="1" fill="#202020"/>
<rect x="199" y="758" width="1" height="1" fill="#202020"/>
<rect x="201" y="758" width="1" height="1" fill="#202020"/>
<rect x="203" y="758" width="1" height="1" fill="#202020"/>
<rect x="205" y="758" width="1" height="1" fill="#202020"/>
<rect x="207" y="758" width="1" height="1" fill="#202020"/>
<rect x="209" y="758" width="1" height="1" fill="#202020"/>
<rect x="211" y="758" width="1" height="1" fill="#202020"/>
<rect x="213" y="758" width="1" height="1" fill="#202020"/>
<rect x="4" y="761" width="1017" height="1" fill="#c8c8c8"/>
<rect x="3" y="762" width="1018" height="1" fill="#a0a0a0"/>
<rect x="3" y="763" width="1018" height="1" fill="#404040"/>
<rect x="3" y="764" width="1018" height="1" fill="#a0a0a0"/>
<rect x="2" y="765" width="1020" height="1" fill="#c8c8c8"/>
<rect x="1" y="766" width="1022" height="1" fill="#888888"/>
<rect x="0" y="767" width="1024" height="1" fill="#404040"/>
<g fill="#000000"><use href="#g6587" x="9" y="6"/><use href="#g4ef6" x="21" y="6"/><use href="#g28" x="33" y="6"/><use href="#g46" x="39" y="6"/><use href="#g29" x="45" y="6"/></g>
<g fill="#000000"><use href="#g8f68" x="63" y="6"/><use href="#g8ff9" x="75" y="6"/><use href="#g2f" x="87" y="6"/><use href="#g901a" x="93" y="6"/><use href="#g9053" x="105" y="6"/><use href="#g28" x="117" y="6"/><use href="#g54" x="123" y="6"/><use href="#g29" x="129" y="6"/></g>
<g fill="#000000"><use href="#g54cd" x="147" y="6"/><use href="#g5e94" x="159" y="6"/><use href="#g28" x="171" y="6"/><use href="#g52" x="177" y="6"/><use href="#g29" x="183" y="6"/></g>
<g fill="#000000"><use href="#g5149" x="201" y="6"/><use href="#g6807" x="213" y="6"/><use href="#g2f" x="225" y="6"/><use href="#g5206" x="231" y="6"/><use href="#g6790" x="243" y="6"/><use href="#g28" x="255" y="6"/><use href="#g4d" x="261" y="6"/><use href="#g29" x="267" y="6"/></g>
<g fill="#000000"><use href="#g6fc0" x="285" y="6"/><use href="#g52b1" x="297" y="6"/><use href="#g28" x="309" y="6"/><use href="#g53" x="315" y="6"/><use href="#g29" x="321" y="6"/></g>
<g fill="#000000"><use href="#g529f" x="339" y="6"/><use href="#g80fd" x="351" y="6"/><use href="#g28" x="363" y="6"/><use href="#g55" x="369" y="6"/><use href="#g29" x="375" y="6"/></g>
<g fill="#000000"><use href="#g5e2e" x="393" y="6"/><use href="#g52a9" x="405" y="6"/><use href="#g28" x="417" y="6"/><use href="#g48" x="423" y="6"/><use href="#g29" x="429" y="6"/></g>
<rect x="155" y="40" width="1" height="308" fill="#343434"/>
<rect x="62" y="70" width="938" height="1" fill="#343434"/>
<rect x="249" y="40" width="1" height="308" fill="#343434"/>
<rect x="62" y="101" width="938" height="1" fill="#343434"/>
<rect x="343" y="40" width="1" height="308" fill="#343434"/>
<rect x="62" y="132" width="938" height="1" fill="#343434"/>
<rect x="437" y="40" width="1" height="308" fill="#343434"/>
<rect x="62" y="163" width="938" height="1" fill="#343434"/>
<rect x="531" y="40" width="1" height="308" fill="#343434"/>
<rect x="62" y="194" width="938" height="1" fill="#343434"/>
<rect x="625" y="40" width="1" height="308" fill="#343434"/>
<rect x="62" y="225" width="938" height="1" fill="#343434"/>
<rect x="719" y="40" width="1" height="308" fill="#343434"/>
<rect x="62" y="256" width="938" height="1" fill="#343434"/>
<rect x="813" y="40" width="1" height="308" fill="#343434"/>
<rect x="62" y="287" width="938" height="1" fill="#343434"/>
<rect x="907" y="40" width="1" height="308" fill="#343434"/>
<rect x="62" y="318" width="938" height="1" fill="#343434"/>
<rect x="60" y="38" width="942" height="2" fill="#3e3e3e"/>
<rect x="60" y="348" width="942" height="2" fill="#3e3e3e"/>
<rect x="60" y="38" width="2" height="312" fill="#3e3e3e"/>
<rect x="1000" y="38" width="2" height="312" fill="#3e3e3e"/>
<g fill="#d0d0d0"><use href="#g32" x="23" y="33"/><use href="#g2e" x="29" y="33"/><use href="#g35" x="35" y="33"/><use href="#g30" x="41" y="33"/><use href="#g30" x="47" y="33"/></g>
<g fill="#d0d0d0"><use href="#g32" x="23" y="64"/><use href="#g2e" x="29" y="64"/><use href="#g30" x="35" y="64"/><use href="#g30" x="41" y="64"/><use href="#g30" x="47" y="64"/></g>
<g fill="#d0d0d0"><use href="#g31" x="23" y="95"/><use href="#g2e" x="29" y="95"/><use href="#g35" x="35" y="95"/><use href="#g30" x="41" y="95"/><use href="#g30" x="47" y="95"/></g>
<g fill="#d0d0d0"><use href="#g31" x="23" y="126"/><use href="#g2e" x="29" y="126"/><use href="#g30" x="35" y="126"/><use href="#g30" x="41" y="126"/><use href="#g30" x="47" y="126"/></g>
<g fill="#d0d0d0"><use href="#g30" x="23" y="157"/><use href="#g2e" x="29" y="157"/><use href="#g35" x="35" y="157"/><use href="#g30" x="41" y="157"/><use href="#g30" x="47" y="157"/></g>
<g fill="#d0d0d0"><use href="#g30" x="23" y="188"/><use href="#g2e" x="29" y="188"/><use href="#g30" x="35" y="188"/><use href="#g30" x="41" y="188"/><use href="#g30" x="47" y="188"/></g>
<g fill="#d0d0d0"><use href="#g2d" x="17" y="219"/><use href="#g30" x="23" y="219"/><use href="#g2e" x="29" y="219"/><use href="#g35" x="35" y="219"/><use href="#g30" x="41" y="219"/><use href="#g30" x="47" y="219"/></g>
<g fill="#d0d0d0"><use href="#g2d" x="17" y="250"/><use href="#g31" x="23" y="250"/><use href="#g2e" x="29" y="250"/><use href="#g30" x="35" y="250"/><use href="#g30" x="41" y="250"/><use href="#g30" x="47" y="250"/></g>
<g fill="#d0d0d0"><use href="#g2d" x="17" y="281"/><use href="#g31" x="23" y="281"/><use href="#g2e" x="29" y="281"/><use href="#g35" x="35" y="281"/><use href="#g30" x="41" y="281"/><use href="#g30" x="47" y="281"/></g>
<g fill="#d0d0d0"><use href="#g2d" x="17" y="312"/><use href="#g32" x="23" y="312"/><use href="#g2e" x="29" y="312"/><use href="#g30" x="35" y="312"/><use href="#g30" x="41" y="312"/><use href="#g30" x="47" y="312"/></g>
<g fill="#d0d0d0"><use href="#g2d" x="17" y="343"/><use href="#g32" x="23" y="343"/><use href="#g2e" x="29" y="343"/><use href="#g35" x="35" y="343"/><use href="#g30" x="41" y="343"/><use href="#g30" x="47" y="343"/></g>
<path fill="#ffff00" d="M61 167h1v1h-1zM62 168h2v1h-2zM64 169h1v1h-1zM65 170h2v1h-2zM67 171h1v1h-1zM68 172h2v1h-2zM70 173h1v1h-1zM71 174h2v1h-2zM73 175h2v1h-2zM75 176h2v1h-2zM77 177h1v1h-1zM78 178h2v1h-2zM80 179h2v1h-2zM82 180h1v1h-1zM83 181h2v1h-2zM85 182h2v1h-2zM87 183h2v1h-2zM89 184h2v1h-2zM91 185h2v1h-2zM93 186h2v1h-2zM95 187h2v1h-2zM97 188h2v1h-2zM99 189h2v1h-2zM101 190h2v1h-2zM103 191h2v1h-2zM105 192h2v1h-2zM107 193h2v1h-2zM109 194h2v1h-2zM111 195h2v1h-2zM113 196h2v1h-2zM115 197h2v1h-2zM117 198h2v1h-2zM119 199h2v1h-2zM121 200h2v1h-2zM123 201h2v1h-2zM125 202h2v1h-2zM127 203h2v1h-2zM129 204h2v1h-2zM131 205h2v1h-2zM133 206h2v1h-2zM135 207h2v1h-2zM137 208h2v1h-2zM139 209h2v1h-2zM141 210h2v1h-2zM143 211h2v1h-2zM145 212h2v1h-2zM147 213h2v1h-2zM149 214h3v1h-3zM152 215h2v1h-2zM154 216h3v1h-3zM157 217h2v1h-2zM159 218h2v1h-2zM161 219h3v1h-3zM164 220h2v1h-2zM166 221h3v1h-3zM169 222h2v1h-2zM171 223h3v1h-3zM174 224h2v1h-2zM176 225h3v1h-3zM179 226h2v1h-2zM181 227h2v1h-2zM183 228h3v1h-3zM186 229h2v1h-2zM188 230h3v1h-3zM191 231h2v1h-2zM193 232h3v1h-3zM196 233h2v1h-2zM198 234h3v1h-3zM201 235h2v1h-2zM203 236h2v1h-2zM205 237h3v1h-3zM208 238h2v1h-2zM210 239h3v1h-3zM213 240h2v1h-2zM215 241h3v1h-3zM218 242h3v1h-3zM221 243h2v1h-2zM223 244h3v1h-3zM226 245h3v1h-3zM229 246h3v1h-3zM232 247h2v1h-2zM234 248h3v1h-3zM237 249h3v1h-3zM240 250h3v1h-3zM243 251h2v1h-2zM245 252h3v1h-3zM248 253h3v1h-3zM251 254h3v1h-3zM254 255h4v1h-4zM258 256h3v1h-3zM261 257h3v1h-3zM264 258h4v1h-4zM268 259h3v1h-3zM271 260h3v1h-3zM274 261h4v1h-4zM278 262h3v1h-3zM281 263h3v1h-3zM284 264h4v1h-4zM288 265h3v1h-3zM291 266h3v1h-3zM294 267h3v1h-3zM297 268h3v1h-3zM300 269h3v1h-3zM303 270h4v1h-4zM307 271h3v1h-3zM310 272h3v1h-3zM313 273h3v1h-3zM316 274h3v1h-3zM319 275h4v1h-4zM323 276h3v1h-3zM326 277h4v1h-4zM330 278h4v1h-4zM334 279h3v1h-3zM337 280h4v1h-4zM341 281h3v1h-3zM344 282h4v1h-4zM348 283h3v1h-3zM351 284h4v1h-4zM355 285h3v1h-3zM358 286h4v1h-4zM362 287h4v1h-4zM366 288h4v1h-4zM370 289h4v1h-4zM374 290h4v1h-4zM378 291h4v1h-4zM382 292h5v1h-5zM387 293h4v1h-4zM391 294h4v1h-4zM395 295h4v1h-4zM399 296h10v1h-10zM409 297h10v1h-10zM419 298h4v1h-4zM423 299h5v1h-5zM428 300h4v1h-4zM432 301h5v1h-5zM437 302h4v1h-4zM441 303h5v1h-5zM446 304h4v1h-4zM450 305h6v1h-6zM456 306h6v1h-6zM462 307h6v1h-6zM468 308h6v1h-6zM474 309h7v1h-7zM481 310h7v1h-7zM488 311h7v1h-7zM495 312h6v1h-6zM501 313h6v1h-6zM507 314h6v1h-6zM513 315h6v1h-6zM519 316h6v1h-6zM525 317h7v1h-7zM532 318h8v1h-8zM540 319h8v1h-8zM548 320h8v1h-8zM556 321h10v1h-10zM566 322h9v1h-9zM575 323h8v1h-8zM583 324h8v1h-8zM591 325h8v1h-8zM599 326h10v1h-10zM609 327h10v1h-10zM619 328h11v1h-11zM630 329h11v1h-11zM641 330h10v1h-10zM651 331h11v1h-11zM662 332h10v1h-10zM672 333h10v1h-10zM682 334h10v1h-10zM692 335h10v1h-10zM702 336h10v1h-10zM712 337h16v1h-16zM728 338h20v1h-20zM748 339h20v1h-20zM768 340h15v1h-15zM783 341h10v1h-10zM793 342h29v1h-29zM822 343h19v1h-19zM841 344h23v1h-23zM864 345h28v1h-28zM892 346h61v1h-61zM953 347h48v1h-48z"/>
<path fill="#00ffff" d="M661 199h46v1h-46zM534 200h24v1h-24zM652 200h9v1h-9zM707 200h10v1h-10zM450 201h84v1h-84zM558 201h23v1h-23zM639 201h13v1h-13zM717 201h9v1h-9zM325 202h33v1h-33zM442 202h8v1h-8zM581 202h58v1h-58zM726 202h7v1h-7zM806 202h45v1h-45zM320 203h5v1h-5zM358 203h7v1h-7zM434 203h8v1h-8zM733 203h7v1h-7zM787 203h19v1h-19zM851 203h22v1h-22zM315 204h5v1h-5zM365 204h8v1h-8zM426 204h8v1h-8zM740 204h11v1h-11zM778 204h9v1h-9zM873 204h53v1h-53zM309 205h6v1h-6zM373 205h7v1h-7zM419 205h7v1h-7zM751 205h27v1h-27zM926 205h11v1h-11zM303 206h6v1h-6zM380 206h39v1h-39zM937 206h8v1h-8zM298 207h5v1h-5zM945 207h8v1h-8zM292 208h6v1h-6zM953 208h12v1h-12zM991 208h10v1h-10zM204 209h23v1h-23zM286 209h6v1h-6zM965 209h26v1h-26zM200 210h4v1h-4zM227 210h7v1h-7zM281 210h5v1h-5zM196 211h4v1h-4zM234 211h7v1h-7zM276 211h5v1h-5zM192 212h4v1h-4zM241 212h15v1h-15zM271 212h5v1h-5zM188 213h4v1h-4zM256 213h15v1h-15zM184 214h4v1h-4zM181 215h3v1h-3zM81 216h18v1h-18zM177 216h4v1h-4zM77 217h4v1h-4zM99 217h6v1h-6zM174 217h3v1h-3zM73 218h4v1h-4zM105 218h6v1h-6zM170 218h4v1h-4zM70 219h3v1h-3zM111 219h4v1h-4zM166 219h4v1h-4zM66 220h4v1h-4zM115 220h4v1h-4zM162 220h4v1h-4zM63 221h3v1h-3zM119 221h5v1h-5zM158 221h4v1h-4zM61 222h2v1h-2zM124 222h4v1h-4zM154 222h4v1h-4zM128 223h26v1h-26z"/>
<path fill="#00ffff" d="M54 190h2v1h-2zM1007 190h2v1h-2zM54 191h3v1h-3zM1006 191h3v1h-3zM54 192h4v1h-4zM1005 192h4v1h-4zM54 193h6v1h-6zM1003 193h6v1h-6zM54 194h6v1h-6zM1002 194h7v1h-7zM54 195h6v1h-6zM1003 195h6v1h-6zM54 196h4v1h-4zM1005 196h4v1h-4zM54 197h3v1h-3zM1006 197h3v1h-3zM54 198h2v1h-2zM1007 198h2v1h-2z"/>
<path fill="#00ffff" d="M495 202h1v1h-1zM494 203h1v1h-1zM496 203h1v1h-1zM494 204h1v1h-1zM496 204h1v1h-1zM493 205h1v1h-1zM497 205h1v1h-1zM493 206h1v1h-1zM497 206h1v1h-1zM492 207h1v1h-1zM498 207h1v1h-1zM492 208h1v1h-1zM498 208h1v1h-1zM491 209h1v1h-1zM499 209h1v1h-1zM491 210h1v1h-1zM499 210h1v1h-1zM490 211h1v1h-1zM500 211h1v1h-1zM490 212h1v1h-1zM500 212h1v1h-1zM489 213h13v1h-13z"/>
<g fill="#00ffff"><use href="#g31" x="492" y="213"/></g>
<path fill="#00ffff" d="M571 202h1v1h-1zM570 203h1v1h-1zM572 203h1v1h-1zM570 204h1v1h-1zM572 204h1v1h-1zM569 205h1v1h-1zM573 205h1v1h-1zM569 206h1v1h-1zM573 206h1v1h-1zM568 207h1v1h-1zM574 207h1v1h-1zM568 208h1v1h-1zM574 208h1v1h-1zM567 209h1v1h-1zM575 209h1v1h-1zM567 210h1v1h-1zM575 210h1v1h-1zM566 211h1v1h-1zM576 211h1v1h-1zM566 212h1v1h-1zM576 212h1v1h-1zM565 213h13v1h-13z"/>
<g fill="#00ffff"><use href="#g32" x="568" y="213"/></g>
<path fill="#00ffff" d="M813 190h13v1h-13zM814 191h1v1h-1zM824 191h1v1h-1zM814 192h1v1h-1zM824 192h1v1h-1zM815 193h1v1h-1zM823 193h1v1h-1zM815 194h1v1h-1zM823 194h1v1h-1zM816 195h1v1h-1zM822 195h1v1h-1zM816 196h1v1h-1zM822 196h1v1h-1zM817 197h1v1h-1zM821 197h1v1h-1zM817 198h1v1h-1zM821 198h1v1h-1zM818 199h1v1h-1zM820 199h1v1h-1zM818 200h1v1h-1zM820 200h1v1h-1zM819 201h1v1h-1z"/>
<g fill="#00ffff"><use href="#g33" x="816" y="178"/></g>
<path fill="#ffff00" d="M495 313h1v1h-1zM494 314h1v1h-1zM496 314h1v1h-1zM494 315h1v1h-1zM496 315h1v1h-1zM493 316h1v1h-1zM497 316h1v1h-1zM493 317h1v1h-1zM497 317h1v1h-1zM492 318h1v1h-1zM498 318h1v1h-1zM492 319h1v1h-1zM498 319h1v1h-1zM491 320h1v1h-1zM499 320h1v1h-1zM491 321h1v1h-1zM499 321h1v1h-1zM490 322h1v1h-1zM500 322h1v1h-1zM490 323h1v1h-1zM500 323h1v1h-1zM489 324h13v1h-13z"/>
<g fill="#ffff00"><use href="#g31" x="492" y="324"/></g>
<path fill="#ffff00" d="M571 323h1v1h-1zM570 324h1v1h-1zM572 324h1v1h-1zM570 325h1v1h-1zM572 325h1v1h-1zM569 326h1v1h-1zM573 326h1v1h-1zM569 327h1v1h-1zM573 327h1v1h-1zM568 328h1v1h-1zM574 328h1v1h-1zM568 329h1v1h-1zM574 329h1v1h-1zM567 330h1v1h-1zM575 330h1v1h-1zM567 331h1v1h-1zM575 331h1v1h-1zM566 332h1v1h-1zM576 332h1v1h-1zM566 333h1v1h-1zM576 333h1v1h-1zM565 334h13v1h-13z"/>
<g fill="#ffff00"><use href="#g32" x="568" y="334"/></g>
<path fill="#ffff00" d="M813 330h13v1h-13zM814 331h1v1h-1zM824 331h1v1h-1zM814 332h1v1h-1zM824 332h1v1h-1zM815 333h1v1h-1zM823 333h1v1h-1zM815 334h1v1h-1zM823 334h1v1h-1zM816 335h1v1h-1zM822 335h1v1h-1zM816 336h1v1h-1zM822 336h1v1h-1zM817 337h1v1h-1zM821 337h1v1h-1zM817 338h1v1h-1zM821 338h1v1h-1zM818 339h1v1h-1zM820 339h1v1h-1zM818 340h1v1h-1zM820 340h1v1h-1zM819 341h1v1h-1z"/>
<g fill="#ffff00"><use href="#g33" x="816" y="318"/></g>
<g fill="#ffff00"><use href="#g54" x="61" y="26"/><use href="#g72" x="67" y="26"/><use href="#g31" x="79" y="26"/><use href="#g53" x="97" y="26"/><use href="#g31" x="103" y="26"/><use href="#g31" x="109" y="26"/><use href="#g53" x="121" y="26"/><use href="#g57" x="127" y="26"/><use href="#g52" x="133" y="26"/><use href="#g31" x="145" y="26"/><use href="#g30" x="151" y="26"/><use href="#g30" x="157" y="26"/><use href="#g2e" x="163" y="26"/><use href="#g30" x="169" y="26"/><use href="#g30" x="175" y="26"/><use href="#g30" x="181" y="26"/><use href="#g30" x="187" y="26"/><use href="#g30" x="193" y="26"/><use href="#g6d" x="199" y="26"/><use href="#g55" x="205" y="26"/><use href="#g2f" x="211" y="26"/><use href="#g31" x="217" y="26"/><use href="#g2e" x="223" y="26"/><use href="#g32" x="229" y="26"/><use href="#g30" x="235" y="26"/><use href="#g30" x="241" y="26"/><use href="#g30" x="247" y="26"/><use href="#g30" x="253" y="26"/><use href="#g55" x="259" y="26"/></g>
<g fill="#00ffff"><use href="#g54" x="535" y="26"/><use href="#g72" x="541" y="26"/><use href="#g32" x="553" y="26"/><use href="#g53" x="571" y="26"/><use href="#g32" x="577" y="26"/><use href="#g31" x="583" y="26"/><use href="#g4c" x="595" y="26"/><use href="#g6f" x="601" y="26"/><use href="#g67" x="607" y="26"/><use href="#g4d" x="613" y="26"/><use href="#g30" x="625" y="26"/><use href="#g2e" x="631" y="26"/><use href="#g35" x="637" y="26"/><use href="#g30" x="643" y="26"/><use href="#g30" x="649" y="26"/><use href="#g30" x="655" y="26"/><use href="#g30" x="661" y="26"/><use href="#g64" x="667" y="26"/><use href="#g42" x="673" y="26"/><use href="#g2f" x="679" y="26"/><use href="#g30" x="685" y="26"/><use href="#g2e" x="691" y="26"/><use href="#g30" x="697" y="26"/><use href="#g30" x="703" y="26"/><use href="#g30" x="709" y="26"/><use href="#g30" x="715" y="26"/><use href="#g30" x="721" y="26"/><use href="#g64" x="727" y="26"/><use href="#g42" x="733" y="26"/></g>
<g fill="#ffff00"><use href="#g5149" x="760" y="67"/><use href="#g6807" x="772" y="67"/><use href="#g31" x="784" y="67"/><use href="#g3a" x="790" y="67"/><use href="#g32" x="796" y="67"/><use href="#g2e" x="802" y="67"/><use href="#g34" x="808" y="67"/><use href="#g33" x="814" y="67"/><use href="#g30" x="820" y="67"/><use href="#g30" x="826" y="67"/><use href="#g30" x="832" y="67"/><use href="#g47" x="838" y="67"/><use href="#g48" x="844" y="67"/><use href="#g7a" x="850" y="67"/><use href="#g31" x="862" y="67"/><use href="#g2e" x="868" y="67"/><use href="#g31" x="874" y="67"/><use href="#g31" x="880" y="67"/><use href="#g39" x="886" y="67"/><use href="#g33" x="892" y="67"/><use href="#g32" x="898" y="67"/></g>
<g fill="#ffff00"><use href="#g5149" x="760" y="83"/><use href="#g6807" x="772" y="83"/><use href="#g32" x="784" y="83"/><use href="#g3a" x="790" y="83"/><use href="#g32" x="796" y="83"/><use href="#g2e" x="802" y="83"/><use href="#g34" x="808" y="83"/><use href="#g37" x="814" y="83"/><use href="#g30" x="820" y="83"/><use href="#g30" x="826" y="83"/><use href="#g30" x="832" y="83"/><use href="#g47" x="838" y="83"/><use href="#g48" x="844" y="83"/><use href="#g7a" x="850" y="83"/><use href="#g31" x="862" y="83"/><use href="#g2e" x="868" y="83"/><use href="#g30" x="874" y="83"/><use href="#g38" x="880" y="83"/><use href="#g34" x="886" y="83"/><use href="#g38" x="892" y="83"/><use href="#g30" x="898" y="83"/></g>
<g fill="#ffff00"><use href="#g5149" x="760" y="99"/><use href="#g6807" x="772" y="99"/><use href="#g33" x="784" y="99"/><use href="#g3a" x="790" y="99"/><use href="#g32" x="796" y="99"/><use href="#g2e" x="802" y="99"/><use href="#g36" x="808" y="99"/><use href="#g30" x="814" y="99"/><use href="#g31" x="820" y="99"/><use href="#g35" x="826" y="99"/><use href="#g30" x="832" y="99"/><use href="#g47" x="838" y="99"/><use href="#g48" x="844" y="99"/><use href="#g7a" x="850" y="99"/><use href="#g31" x="862" y="99"/><use href="#g2e" x="868" y="99"/><use href="#g30" x="874" y="99"/><use href="#g32" x="880" y="99"/><use href="#g30" x="886" y="99"/><use href="#g36" x="892" y="99"/><use href="#g37" x="898" y="99"/></g>
<g fill="#ffff00"><use href="#g3e" x="750" y="99"/></g>
<g fill="#00ffff"><use href="#g5149" x="764" y="126"/><use href="#g6807" x="776" y="126"/><use href="#g31" x="788" y="126"/><use href="#g3a" x="794" y="126"/><use href="#g32" x="800" y="126"/><use href="#g2e" x="806" y="126"/><use href="#g34" x="812" y="126"/><use href="#g33" x="818" y="126"/><use href="#g30" x="824" y="126"/><use href="#g30" x="830" y="126"/><use href="#g30" x="836" y="126"/><use href="#g47" x="842" y="126"/><use href="#g48" x="848" y="126"/><use href="#g7a" x="854" y="126"/><use href="#g2d" x="866" y="126"/><use href="#g30" x="872" y="126"/><use href="#g2e" x="878" y="126"/><use href="#g31" x="884" y="126"/><use href="#g30" x="890" y="126"/><use href="#g37" x="896" y="126"/><use href="#g35" x="902" y="126"/><use href="#g31" x="908" y="126"/><use href="#g64" x="914" y="126"/><use href="#g42" x="920" y="126"/></g>
<g fill="#00ffff"><use href="#g5149" x="764" y="142"/><use href="#g6807" x="776" y="142"/><use href="#g32" x="788" y="142"/><use href="#g3a" x="794" y="142"/><use href="#g32" x="800" y="142"/><use href="#g2e" x="806" y="142"/><use href="#g34" x="812" y="142"/><use href="#g37" x="818" y="142"/><use href="#g30" x="824" y="142"/><use href="#g30" x="830" y="142"/><use href="#g30" x="836" y="142"/><use href="#g47" x="842" y="142"/><use href="#g48" x="848" y="142"/><use href="#g7a" x="854" y="142"/><use href="#g2d" x="866" y="142"/><use href="#g30" x="872" y="142"/><use href="#g2e" x="878" y="142"/><use href="#g31" x="884" y="142"/><use href="#g31" x="890" y="142"/><use href="#g32" x="896" y="142"/><use href="#g34" x="902" y="142"/><use href="#g34" x="908" y="142"/><use href="#g64" x="914" y="142"/><use href="#g42" x="920" y="142"/></g>
<g fill="#00ffff"><use href="#g5149" x="764" y="158"/><use href="#g6807" x="776" y="158"/><use href="#g33" x="788" y="158"/><use href="#g3a" x="794" y="158"/><use href="#g32" x="800" y="158"/><use href="#g2e" x="806" y="158"/><use href="#g36" x="812" y="158"/><use href="#g30" x="818" y="158"/><use href="#g31" x="824" y="158"/><use href="#g35" x="830" y="158"/><use href="#g30" x="836" y="158"/><use href="#g47" x="842" y="158"/><use href="#g48" x="848" y="158"/><use href="#g7a" x="854" y="158"/><use href="#g2d" x="866" y="158"/><use href="#g30" x="872" y="158"/><use href="#g2e" x="878" y="158"/><use href="#g31" x="884" y="158"/><use href="#g32" x="890" y="158"/><use href="#g37" x="896" y="158"/><use href="#g39" x="902" y="158"/><use href="#g39" x="908" y="158"/><use href="#g64" x="914" y="158"/><use href="#g42" x="920" y="158"/></g>
<g fill="#00ffff"><use href="#g3e" x="754" y="158"/></g>
<rect x="13" y="370" width="18" height="12" fill="#c8c8c8"/>
<g fill="#000000"><use href="#g31" x="19" y="370"/></g>
<g fill="#d0d0d0"><use href="#g901a" x="37" y="370"/><use href="#g9053" x="49" y="370"/><use href="#g31" x="61" y="370"/><use href="#g8d77" x="79" y="370"/><use href="#g59cb" x="91" y="370"/><use href="#g3a" x="103" y="370"/><use href="#g32" x="109" y="370"/><use href="#g2e" x="115" y="370"/><use href="#g32" x="121" y="370"/><use href="#g30" x="127" y="370"/><use href="#g30" x="133" y="370"/><use href="#g30" x="139" y="370"/><use href="#g30" x="145" y="370"/><use href="#g47" x="151" y="370"/><use href="#g48" x="157" y="370"/><use href="#g7a" x="163" y="370"/></g>
<rect x="175" y="375" width="9" height="1" fill="#ffff00"/>
<rect x="187" y="375" width="9" height="1" fill="#00ffff"/>
<g fill="#d0d0d0"><use href="#g4e2d" x="444" y="370"/><use href="#g9891" x="456" y="370"/><use href="#g5e26" x="468" y="370"/><use href="#g5bbd" x="480" y="370"/><use href="#g3a" x="492" y="370"/><use href="#g31" x="498" y="370"/><use href="#g2e" x="504" y="370"/><use href="#g30" x="510" y="370"/><use href="#g30" x="516" y="370"/><use href="#g30" x="522" y="370"/><use href="#g30" x="528" y="370"/><use href="#g30" x="534" y="370"/><use href="#g6b" x="540" y="370"/><use href="#g48" x="546" y="370"/><use href="#g7a" x="552" y="370"/></g>
<g fill="#d0d0d0"><use href="#g7ec8" x="923" y="370"/><use href="#g6b62" x="935" y="370"/><use href="#g3a" x="947" y="370"/><use href="#g32" x="953" y="370"/><use href="#g2e" x="959" y="370"/><use href="#g36" x="965" y="370"/><use href="#g39" x="971" y="370"/><use href="#g37" x="977" y="370"/><use href="#g35" x="983" y="370"/><use href="#g30" x="989" y="370"/><use href="#g47" x="995" y="370"/><use href="#g48" x="1001" y="370"/><use href="#g7a" x="1007" y="370"/></g>
<rect x="155" y="411" width="1" height="308" fill="#343434"/>
<rect x="62" y="441" width="938" height="1" fill="#343434"/>
<rect x="249" y="411" width="1" height="308" fill="#343434"/>
<rect x="62" y="472" width="938" height="1" fill="#343434"/>
<rect x="343" y="411" width="1" height="308" fill="#343434"/>
<rect x="62" y="503" width="938" height="1" fill="#343434"/>
<rect x="437" y="411" width="1" height="308" fill="#343434"/>
<rect x="62" y="534" width="938" height="1" fill="#343434"/>
<rect x="531" y="411" width="1" height="308" fill="#343434"/>
<rect x="62" y="565" width="938" height="1" fill="#343434"/>
<rect x="625" y="411" width="1" height="308" fill="#343434"/>
<rect x="62" y="596" width="938" height="1" fill="#343434"/>
<rect x="719" y="411" width="1" height="308" fill="#343434"/>
<rect x="62" y="627" width="938" height="1" fill="#343434"/>
<rect x="813" y="411" width="1" height="308" fill="#343434"/>
<rect x="62" y="658" width="938" height="1" fill="#343434"/>
<rect x="907" y="411" width="1" height="308" fill="#343434"/>
<rect x="62" y="689" width="938" height="1" fill="#343434"/>
<rect x="60" y="409" width="942" height="2" fill="#3e3e3e"/>
<rect x="60" y="719" width="942" height="2" fill="#3e3e3e"/>
<rect x="60" y="409" width="2" height="312" fill="#3e3e3e"/>
<rect x="1000" y="409" width="2" height="312" fill="#3e3e3e"/>
<g fill="#d0d0d0"><use href="#g35" x="17" y="404"/><use href="#g30" x="23" y="404"/><use href="#g2e" x="29" y="404"/><use href="#g30" x="35" y="404"/><use href="#g30" x="41" y="404"/><use href="#g30" x="47" y="404"/></g>
<g fill="#d0d0d0"><use href="#g34" x="17" y="435"/><use href="#g30" x="23" y="435"/><use href="#g2e" x="29" y="435"/><use href="#g30" x="35" y="435"/><use href="#g30" x="41" y="435"/><use href="#g30" x="47" y="435"/></g>
<g fill="#d0d0d0"><use href="#g33" x="17" y="466"/><use href="#g30" x="23" y="466"/><use href="#g2e" x="29" y="466"/><use href="#g30" x="35" y="466"/><use href="#g30" x="41" y="466"/><use href="#g30" x="47" y="466"/></g>
<g fill="#d0d0d0"><use href="#g32" x="17" y="497"/><use href="#g30" x="23" y="497"/><use href="#g2e" x="29" y="497"/><use href="#g30" x="35" y="497"/><use href="#g30" x="41" y="497"/><use href="#g30" x="47" y="497"/></g>
<g fill="#d0d0d0"><use href="#g31" x="17" y="528"/><use href="#g30" x="23" y="528"/><use href="#g2e" x="29" y="528"/><use href="#g30" x="35" y="528"/><use href="#g30" x="41" y="528"/><use href="#g30" x="47" y="528"/></g>
<g fill="#d0d0d0"><use href="#g30" x="23" y="559"/><use href="#g2e" x="29" y="559"/><use href="#g30" x="35" y="559"/><use href="#g30" x="41" y="559"/><use href="#g30" x="47" y="559"/></g>
<g fill="#d0d0d0"><use href="#g2d" x="11" y="590"/><use href="#g31" x="17" y="590"/><use href="#g30" x="23" y="590"/><use href="#g2e" x="29" y="590"/><use href="#g30" x="35" y="590"/><use href="#g30" x="41" y="590"/><use href="#g30" x="47" y="590"/></g>
<g fill="#d0d0d0"><use href="#g2d" x="11" y="621"/><use href="#g32" x="17" y="621"/><use href="#g30" x="23" y="621"/><use href="#g2e" x="29" y="621"/><use href="#g30" x="35" y="621"/><use href="#g30" x="41" y="621"/><use href="#g30" x="47" y="621"/></g>
<g fill="#d0d0d0"><use href="#g2d" x="11" y="652"/><use href="#g33" x="17" y="652"/><use href="#g30" x="23" y="652"/><use href="#g2e" x="29" y="652"/><use href="#g30" x="35" y="652"/><use href="#g30" x="41" y="652"/><use href="#g30" x="47" y="652"/></g>
<g fill="#d0d0d0"><use href="#g2d" x="11" y="683"/><use href="#g34" x="17" y="683"/><use href="#g30" x="23" y="683"/><use href="#g2e" x="29" y="683"/><use href="#g30" x="35" y="683"/><use href="#g30" x="41" y="683"/><use href="#g30" x="47" y="683"/></g>
<g fill="#d0d0d0"><use href="#g2d" x="11" y="714"/><use href="#g35" x="17" y="714"/><use href="#g30" x="23" y="714"/><use href="#g2e" x="29" y="714"/><use href="#g30" x="35" y="714"/><use href="#g30" x="41" y="714"/><use href="#g30" x="47" y="714"/></g>
<path fill="#ff00ff" d="M61 612h6v1h-6zM67 613h11v1h-11zM78 614h12v1h-12zM90 615h11v1h-11zM101 616h12v1h-12zM113 617h12v1h-12zM125 618h12v1h-12zM137 619h12v1h-12zM149 620h14v1h-14zM163 621h14v1h-14zM177 622h14v1h-14zM191 623h13v1h-13zM204 624h10v1h-10zM214 625h10v1h-10zM224 626h10v1h-10zM234 627h10v1h-10zM244 628h10v1h-10zM254 629h8v1h-8zM262 630h8v1h-8zM270 631h9v1h-9zM279 632h8v1h-8zM287 633h9v1h-9zM296 634h8v1h-8zM304 635h8v1h-8zM967 635h34v1h-34zM312 636h8v1h-8zM897 636h70v1h-70zM320 637h7v1h-7zM854 637h43v1h-43zM327 638h8v1h-8zM821 638h33v1h-33zM335 639h7v1h-7zM786 639h35v1h-35zM342 640h7v1h-7zM757 640h29v1h-29zM349 641h7v1h-7zM734 641h23v1h-23zM356 642h7v1h-7zM718 642h16v1h-16zM363 643h7v1h-7zM702 643h16v1h-16zM370 644h8v1h-8zM686 644h16v1h-16zM378 645h10v1h-10zM670 645h16v1h-16zM388 646h10v1h-10zM654 646h16v1h-16zM398 647h9v1h-9zM640 647h14v1h-14zM407 648h10v1h-10zM626 648h14v1h-14zM417 649h10v1h-10zM613 649h13v1h-13zM427 650h9v1h-9zM602 650h11v1h-11zM436 651h9v1h-9zM592 651h10v1h-10zM445 652h10v1h-10zM586 652h6v1h-6zM455 653h11v1h-11zM554 653h32v1h-32zM466 654h30v1h-30zM530 654h24v1h-24zM496 655h34v1h-34z"/>
<path fill="#00ff00" d="M61 558h1v1h-1zM62 559h2v1h-2zM64 560h1v1h-1zM65 561h2v1h-2zM67 562h2v1h-2zM69 563h1v1h-1zM70 564h2v1h-2zM72 565h1v1h-1zM73 566h2v1h-2zM75 567h2v1h-2zM77 568h1v1h-1zM78 569h2v1h-2zM80 570h1v1h-1zM81 571h2v1h-2zM83 572h2v1h-2zM85 573h1v1h-1zM86 574h2v1h-2zM88 575h1v1h-1zM89 576h2v1h-2zM91 577h2v1h-2zM93 578h1v1h-1zM94 579h2v1h-2zM96 580h1v1h-1zM97 581h2v1h-2zM99 582h2v1h-2zM101 583h1v1h-1zM102 584h2v1h-2zM104 585h1v1h-1zM105 586h2v1h-2zM107 587h2v1h-2zM109 588h2v1h-2zM111 589h2v1h-2zM113 590h2v1h-2zM115 591h2v1h-2zM117 592h2v1h-2zM119 593h2v1h-2zM121 594h1v1h-1zM122 595h2v1h-2zM124 596h2v1h-2zM126 597h2v1h-2zM128 598h2v1h-2zM130 599h2v1h-2zM132 600h2v1h-2zM134 601h2v1h-2zM136 602h2v1h-2zM138 603h1v1h-1zM139 604h2v1h-2zM141 605h2v1h-2zM143 606h2v1h-2zM145 607h2v1h-2zM147 608h2v1h-2zM149 609h2v1h-2zM151 610h2v1h-2zM153 611h2v1h-2zM155 612h2v1h-2zM157 613h2v1h-2zM159 614h2v1h-2zM161 615h2v1h-2zM163 616h3v1h-3zM166 617h2v1h-2zM168 618h2v1h-2zM170 619h2v1h-2zM172 620h3v1h-3zM175 621h2v1h-2zM177 622h2v1h-2zM179 623h3v1h-3zM182 624h2v1h-2zM184 625h2v1h-2zM186 626h2v1h-2zM188 627h3v1h-3zM191 628h2v1h-2zM193 629h2v1h-2zM195 630h2v1h-2zM197 631h3v1h-3zM200 632h2v1h-2zM202 633h2v1h-2zM204 634h3v1h-3zM207 635h2v1h-2zM209 636h2v1h-2zM211 637h3v1h-3zM214 638h2v1h-2zM216 639h2v1h-2zM218 640h3v1h-3zM221 641h2v1h-2zM223 642h2v1h-2zM225 643h2v1h-2zM227 644h3v1h-3zM230 645h2v1h-2zM232 646h2v1h-2zM234 647h3v1h-3zM237 648h2v1h-2zM239 649h2v1h-2zM241 650h3v1h-3zM244 651h2v1h-2zM246 652h2v1h-2zM248 653h3v1h-3zM251 654h3v1h-3zM254 655h2v1h-2zM256 656h3v1h-3zM259 657h3v1h-3zM262 658h3v1h-3zM265 659h2v1h-2zM267 660h3v1h-3zM270 661h3v1h-3zM273 662h3v1h-3zM276 663h3v1h-3zM279 664h2v1h-2zM281 665h3v1h-3zM284 666h3v1h-3zM287 667h3v1h-3zM290 668h2v1h-2zM292 669h3v1h-3zM295 670h3v1h-3zM298 671h4v1h-4zM302 672h3v1h-3zM934 672h67v1h-67zM305 673h3v1h-3zM892 673h42v1h-42zM308 674h4v1h-4zM864 674h28v1h-28zM312 675h3v1h-3zM845 675h19v1h-19zM315 676h3v1h-3zM826 676h19v1h-19zM318 677h4v1h-4zM807 677h19v1h-19zM322 678h3v1h-3zM793 678h14v1h-14zM325 679h3v1h-3zM767 679h26v1h-26zM328 680h4v1h-4zM749 680h18v1h-18zM332 681h3v1h-3zM741 681h8v1h-8zM335 682h3v1h-3zM732 682h9v1h-9zM338 683h4v1h-4zM724 683h8v1h-8zM342 684h3v1h-3zM715 684h9v1h-9zM345 685h4v1h-4zM706 685h9v1h-9zM349 686h4v1h-4zM698 686h8v1h-8zM353 687h3v1h-3zM689 687h9v1h-9zM356 688h4v1h-4zM681 688h8v1h-8zM360 689h4v1h-4zM673 689h8v1h-8zM364 690h3v1h-3zM666 690h7v1h-7zM367 691h4v1h-4zM659 691h7v1h-7zM371 692h4v1h-4zM651 692h8v1h-8zM375 693h3v1h-3zM644 693h7v1h-7zM378 694h4v1h-4zM637 694h7v1h-7zM382 695h4v1h-4zM630 695h7v1h-7zM386 696h4v1h-4zM623 696h7v1h-7zM390 697h4v1h-4zM616 697h7v1h-7zM394 698h4v1h-4zM609 698h7v1h-7zM398 699h4v1h-4zM602 699h7v1h-7zM402 700h4v1h-4zM596 700h6v1h-6zM406 701h4v1h-4zM589 701h7v1h-7zM410 702h4v1h-4zM582 702h7v1h-7zM414 703h5v1h-5zM575 703h7v1h-7zM419 704h5v1h-5zM567 704h8v1h-8zM424 705h6v1h-6zM558 705h9v1h-9zM430 706h5v1h-5zM548 706h10v1h-10zM435 707h5v1h-5zM540 707h8v1h-8zM440 708h6v1h-6zM533 708h7v1h-7zM446 709h5v1h-5zM527 709h6v1h-6zM451 710h6v1h-6zM520 710h7v1h-7zM457 711h8v1h-8zM512 711h8v1h-8zM465 712h47v1h-47z"/>
<path fill="#ff00ff" d="M54 561h2v1h-2zM1007 561h2v1h-2zM54 562h3v1h-3zM1006 562h3v1h-3zM54 563h4v1h-4zM1005 563h4v1h-4zM54 564h6v1h-6zM1003 564h6v1h-6zM54 565h6v1h-6zM1002 565h7v1h-7zM54 566h6v1h-6zM1003 566h6v1h-6zM54 567h4v1h-4zM1005 567h4v1h-4zM54 568h3v1h-3zM1006 568h3v1h-3zM54 569h2v1h-2zM1007 569h2v1h-2z"/>
<path fill="#ff00ff" d="M495 655h1v1h-1zM494 656h1v1h-1zM496 656h1v1h-1zM494 657h1v1h-1zM496 657h1v1h-1zM493 658h1v1h-1zM497 658h1v1h-1zM493 659h1v1h-1zM497 659h1v1h-1zM492 660h1v1h-1zM498 660h1v1h-1zM492 661h1v1h-1zM498 661h1v1h-1zM491 662h1v1h-1zM499 662h1v1h-1zM491 663h1v1h-1zM499 663h1v1h-1zM490 664h1v1h-1zM500 664h1v1h-1zM490 665h1v1h-1zM500 665h1v1h-1zM489 666h13v1h-13z"/>
<g fill="#ff00ff"><use href="#g31" x="492" y="666"/></g>
<path fill="#ff00ff" d="M571 654h1v1h-1zM570 655h1v1h-1zM572 655h1v1h-1zM570 656h1v1h-1zM572 656h1v1h-1zM569 657h1v1h-1zM573 657h1v1h-1zM569 658h1v1h-1zM573 658h1v1h-1zM568 659h1v1h-1zM574 659h1v1h-1zM568 660h1v1h-1zM574 660h1v1h-1zM567 661h1v1h-1zM575 661h1v1h-1zM567 662h1v1h-1zM575 662h1v1h-1zM566 663h1v1h-1zM576 663h1v1h-1zM566 664h1v1h-1zM576 664h1v1h-1zM565 665h13v1h-13z"/>
<g fill="#ff00ff"><use href="#g32" x="568" y="665"/></g>
<path fill="#ff00ff" d="M813 627h13v1h-13zM814 628h1v1h-1zM824 628h1v1h-1zM814 629h1v1h-1zM824 629h1v1h-1zM815 630h1v1h-1zM823 630h1v1h-1zM815 631h1v1h-1zM823 631h1v1h-1zM816 632h1v1h-1zM822 632h1v1h-1zM816 633h1v1h-1zM822 633h1v1h-1zM817 634h1v1h-1zM821 634h1v1h-1zM817 635h1v1h-1zM821 635h1v1h-1zM818 636h1v1h-1zM820 636h1v1h-1zM818 637h1v1h-1zM820 637h1v1h-1zM819 638h1v1h-1z"/>
<g fill="#ff00ff"><use href="#g33" x="816" y="615"/></g>
<path fill="#00ff00" d="M495 713h1v1h-1zM494 714h1v1h-1zM496 714h1v1h-1zM494 715h1v1h-1zM496 715h1v1h-1zM493 716h1v1h-1zM497 716h1v1h-1zM493 717h1v1h-1zM497 717h1v1h-1zM492 718h1v1h-1zM498 718h1v1h-1zM492 719h1v1h-1zM498 719h1v1h-1zM491 720h1v1h-1zM499 720h1v1h-1zM491 721h1v1h-1zM499 721h1v1h-1zM490 722h1v1h-1zM500 722h1v1h-1zM490 723h1v1h-1zM500 723h1v1h-1zM489 724h13v1h-13z"/>
<g fill="#00ff00"><use href="#g31" x="492" y="724"/></g>
<path fill="#00ff00" d="M571 705h1v1h-1zM570 706h1v1h-1zM572 706h1v1h-1zM570 707h1v1h-1zM572 707h1v1h-1zM569 708h1v1h-1zM573 708h1v1h-1zM569 709h1v1h-1zM573 709h1v1h-1zM568 710h1v1h-1zM574 710h1v1h-1zM568 711h1v1h-1zM574 711h1v1h-1zM567 712h1v1h-1zM575 712h1v1h-1zM567 713h1v1h-1zM575 713h1v1h-1zM566 714h1v1h-1zM576 714h1v1h-1zM566 715h1v1h-1zM576 715h1v1h-1zM565 716h13v1h-13z"/>
<g fill="#00ff00"><use href="#g32" x="568" y="716"/></g>
<path fill="#00ff00" d="M813 665h13v1h-13zM814 666h1v1h-1zM824 666h1v1h-1zM814 667h1v1h-1zM824 667h1v1h-1zM815 668h1v1h-1zM823 668h1v1h-1zM815 669h1v1h-1zM823 669h1v1h-1zM816 670h1v1h-1zM822 670h1v1h-1zM816 671h1v1h-1zM822 671h1v1h-1zM817 672h1v1h-1zM821 672h1v1h-1zM817 673h1v1h-1zM821 673h1v1h-1zM818 674h1v1h-1zM820 674h1v1h-1zM818 675h1v1h-1zM820 675h1v1h-1zM819 676h1v1h-1z"/>
<g fill="#00ff00"><use href="#g33" x="816" y="653"/></g>
<rect x="61" y="397" width="24" height="12" fill="#ff00ff"/>
<g fill="#000000"><use href="#g54" x="61" y="397"/><use href="#g72" x="67" y="397"/><use href="#g35" x="79" y="397"/></g>
<g fill="#ff00ff"><use href="#g53" x="97" y="397"/><use href="#g31" x="103" y="397"/><use href="#g32" x="109" y="397"/><use href="#g4c" x="121" y="397"/><use href="#g6f" x="127" y="397"/><use href="#g67" x="133" y="397"/><use href="#g4d" x="139" y="397"/><use href="#g31" x="151" y="397"/><use href="#g30" x="157" y="397"/><use href="#g2e" x="163" y="397"/><use href="#g30" x="169" y="397"/><use href="#g30" x="175" y="397"/><use href="#g30" x="181" y="397"/><use href="#g30" x="187" y="397"/><use href="#g30" x="193" y="397"/><use href="#g64" x="199" y="397"/><use href="#g42" x="205" y="397"/><use href="#g2f" x="211" y="397"/><use href="#g30" x="217" y="397"/><use href="#g2e" x="223" y="397"/><use href="#g30" x="229" y="397"/><use href="#g30" x="235" y="397"/><use href="#g30" x="241" y="397"/><use href="#g30" x="247" y="397"/><use href="#g30" x="253" y="397"/><use href="#g64" x="259" y="397"/><use href="#g42" x="265" y="397"/></g>
<g fill="#00ff00"><use href="#g54" x="535" y="397"/><use href="#g72" x="541" y="397"/><use href="#g36" x="553" y="397"/><use href="#g53" x="571" y="397"/><use href="#g32" x="577" y="397"/><use href="#g32" x="583" y="397"/><use href="#g53" x="595" y="397"/><use href="#g57" x="601" y="397"/><use href="#g52" x="607" y="397"/><use href="#g31" x="619" y="397"/><use href="#g30" x="625" y="397"/><use href="#g30" x="631" y="397"/><use href="#g2e" x="637" y="397"/><use href="#g30" x="643" y="397"/><use href="#g30" x="649" y="397"/><use href="#g30" x="655" y="397"/><use href="#g30" x="661" y="397"/><use href="#g30" x="667" y="397"/><use href="#g6d" x="673" y="397"/><use href="#g55" x="679" y="397"/><use href="#g2f" x="685" y="397"/><use href="#g31" x="691" y="397"/><use href="#g2e" x="697" y="397"/><use href="#g32" x="703" y="397"/><use href="#g30" x="709" y="397"/><use href="#g30" x="715" y="397"/><use href="#g30" x="721" y="397"/><use href="#g30" x="727" y="397"/><use href="#g55" x="733" y="397"/></g>
<g fill="#00ff00"><use href="#g5149" x="794" y="421"/><use href="#g6807" x="806" y="421"/><use href="#g31" x="818" y="421"/><use href="#g3a" x="824" y="421"/><use href="#g32" x="830" y="421"/><use href="#g2e" x="836" y="421"/><use href="#g34" x="842" y="421"/><use href="#g33" x="848" y="421"/><use href="#g30" x="854" y="421"/><use href="#g30" x="860" y="421"/><use href="#g30" x="866" y="421"/><use href="#g47" x="872" y="421"/><use href="#g48" x="878" y="421"/><use href="#g7a" x="884" y="421"/><use href="#g31" x="896" y="421"/><use href="#g2e" x="902" y="421"/><use href="#g30" x="908" y="421"/><use href="#g32" x="914" y="421"/><use href="#g34" x="920" y="421"/><use href="#g39" x="926" y="421"/><use href="#g36" x="932" y="421"/></g>
<g fill="#00ff00"><use href="#g5149" x="794" y="437"/><use href="#g6807" x="806" y="437"/><use href="#g32" x="818" y="437"/><use href="#g3a" x="824" y="437"/><use href="#g32" x="830" y="437"/><use href="#g2e" x="836" y="437"/><use href="#g34" x="842" y="437"/><use href="#g37" x="848" y="437"/><use href="#g30" x="854" y="437"/><use href="#g30" x="860" y="437"/><use href="#g30" x="866" y="437"/><use href="#g47" x="872" y="437"/><use href="#g48" x="878" y="437"/><use href="#g7a" x="884" y="437"/><use href="#g31" x="896" y="437"/><use href="#g2e" x="902" y="437"/><use href="#g30" x="908" y="437"/><use href="#g35" x="914" y="437"/><use href="#g33" x="920" y="437"/><use href="#g36" x="926" y="437"/><use href="#g34" x="932" y="437"/></g>
<g fill="#00ff00"><use href="#g5149" x="794" y="453"/><use href="#g6807" x="806" y="453"/><use href="#g33" x="818" y="453"/><use href="#g3a" x="824" y="453"/><use href="#g32" x="830" y="453"/><use href="#g2e" x="836" y="453"/><use href="#g36" x="842" y="453"/><use href="#g30" x="848" y="453"/><use href="#g31" x="854" y="453"/><use href="#g35" x="860" y="453"/><use href="#g30" x="866" y="453"/><use href="#g47" x="872" y="453"/><use href="#g48" x="878" y="453"/><use href="#g7a" x="884" y="453"/><use href="#g31" x="896" y="453"/><use href="#g2e" x="902" y="453"/><use href="#g31" x="908" y="453"/><use href="#g33" x="914" y="453"/><use href="#g39" x="920" y="453"/><use href="#g37" x="926" y="453"/><use href="#g35" x="932" y="453"/></g>
<g fill="#00ff00"><use href="#g3e" x="784" y="453"/></g>
<g fill="#ff00ff"><use href="#g5149" x="754" y="475"/><use href="#g6807" x="766" y="475"/><use href="#g31" x="778" y="475"/><use href="#g3a" x="784" y="475"/><use href="#g32" x="790" y="475"/><use href="#g2e" x="796" y="475"/><use href="#g34" x="802" y="475"/><use href="#g33" x="808" y="475"/><use href="#g30" x="814" y="475"/><use href="#g30" x="820" y="475"/><use href="#g30" x="826" y="475"/><use href="#g47" x="832" y="475"/><use href="#g48" x="838" y="475"/><use href="#g7a" x="844" y="475"/><use href="#g2d" x="856" y="475"/><use href="#g32" x="862" y="475"/><use href="#g38" x="868" y="475"/><use href="#g2e" x="874" y="475"/><use href="#g38" x="880" y="475"/><use href="#g37" x="886" y="475"/><use href="#g39" x="892" y="475"/><use href="#g35" x="898" y="475"/><use href="#g38" x="904" y="475"/><use href="#g64" x="910" y="475"/><use href="#g42" x="916" y="475"/></g>
<g fill="#ff00ff"><use href="#g5149" x="754" y="491"/><use href="#g6807" x="766" y="491"/><use href="#g32" x="778" y="491"/><use href="#g3a" x="784" y="491"/><use href="#g32" x="790" y="491"/><use href="#g2e" x="796" y="491"/><use href="#g34" x="802" y="491"/><use href="#g37" x="808" y="491"/><use href="#g30" x="814" y="491"/><use href="#g30" x="820" y="491"/><use href="#g30" x="826" y="491"/><use href="#g47" x="832" y="491"/><use href="#g48" x="838" y="491"/><use href="#g7a" x="844" y="491"/><use href="#g2d" x="856" y="491"/><use href="#g32" x="862" y="491"/><use href="#g38" x="868" y="491"/><use href="#g2e" x="874" y="491"/><use href="#g32" x="880" y="491"/><use href="#g30" x="886" y="491"/><use href="#g39" x="892" y="491"/><use href="#g39" x="898" y="491"/><use href="#g31" x="904" y="491"/><use href="#g64" x="910" y="491"/><use href="#g42" x="916" y="491"/></g>
<g fill="#ff00ff"><use href="#g5149" x="754" y="507"/><use href="#g6807" x="766" y="507"/><use href="#g33" x="778" y="507"/><use href="#g3a" x="784" y="507"/><use href="#g32" x="790" y="507"/><use href="#g2e" x="796" y="507"/><use href="#g36" x="802" y="507"/><use href="#g30" x="808" y="507"/><use href="#g31" x="814" y="507"/><use href="#g35" x="820" y="507"/><use href="#g30" x="826" y="507"/><use href="#g47" x="832" y="507"/><use href="#g48" x="838" y="507"/><use href="#g7a" x="844" y="507"/><use href="#g2d" x="856" y="507"/><use href="#g32" x="862" y="507"/><use href="#g33" x="868" y="507"/><use href="#g2e" x="874" y="507"/><use href="#g36" x="880" y="507"/><use href="#g39" x="886" y="507"/><use href="#g39" x="892" y="507"/><use href="#g38" x="898" y="507"/><use href="#g31" x="904" y="507"/><use href="#g64" x="910" y="507"/><use href="#g42" x="916" y="507"/></g>
<g fill="#ff00ff"><use href="#g3e" x="744" y="507"/></g>
<rect x="13" y="741" width="18" height="12" fill="#c8c8c8"/>
<g fill="#000000"><use href="#g32" x="19" y="741"/></g>
<g fill="#d0d0d0"><use href="#g901a" x="37" y="741"/><use href="#g9053" x="49" y="741"/><use href="#g31" x="61" y="741"/><use href="#g8d77" x="79" y="741"/><use href="#g59cb" x="91" y="741"/><use href="#g3a" x="103" y="741"/><use href="#g32" x="109" y="741"/><use href="#g2e" x="115" y="741"/><use href="#g32" x="121" y="741"/><use href="#g30" x="127" y="741"/><use href="#g30" x="133" y="741"/><use href="#g30" x="139" y="741"/><use href="#g30" x="145" y="741"/><use href="#g47" x="151" y="741"/><use href="#g48" x="157" y="741"/><use href="#g7a" x="163" y="741"/></g>
<rect x="175" y="746" width="9" height="1" fill="#ff00ff"/>
<rect x="187" y="746" width="9" height="1" fill="#00ff00"/>
<g fill="#d0d0d0"><use href="#g4e2d" x="444" y="741"/><use href="#g9891" x="456" y="741"/><use href="#g5e26" x="468" y="741"/><use href="#g5bbd" x="480" y="741"/><use href="#g3a" x="492" y="741"/><use href="#g31" x="498" y="741"/><use href="#g2e" x="504" y="741"/><use href="#g30" x="510" y="741"/><use href="#g30" x="516" y="741"/><use href="#g30" x="522" y="741"/><use href="#g30" x="528" y="741"/><use href="#g30" x="534" y="741"/><use href="#g6b" x="540" y="741"/><use href="#g48" x="546" y="741"/><use href="#g7a" x="552" y="741"/></g>
<g fill="#d0d0d0"><use href="#g7ec8" x="923" y="741"/><use href="#g6b62" x="935" y="741"/><use href="#g3a" x="947" y="741"/><use href="#g32" x="953" y="741"/><use href="#g2e" x="959" y="741"/><use href="#g36" x="965" y="741"/><use href="#g39" x="971" y="741"/><use href="#g37" x="977" y="741"/><use href="#g35" x="983" y="741"/><use href="#g30" x="989" y="741"/><use href="#g47" x="995" y="741"/><use href="#g48" x="1001" y="741"/><use href="#g7a" x="1007" y="741"/></g>
</svg>
</body></html>
